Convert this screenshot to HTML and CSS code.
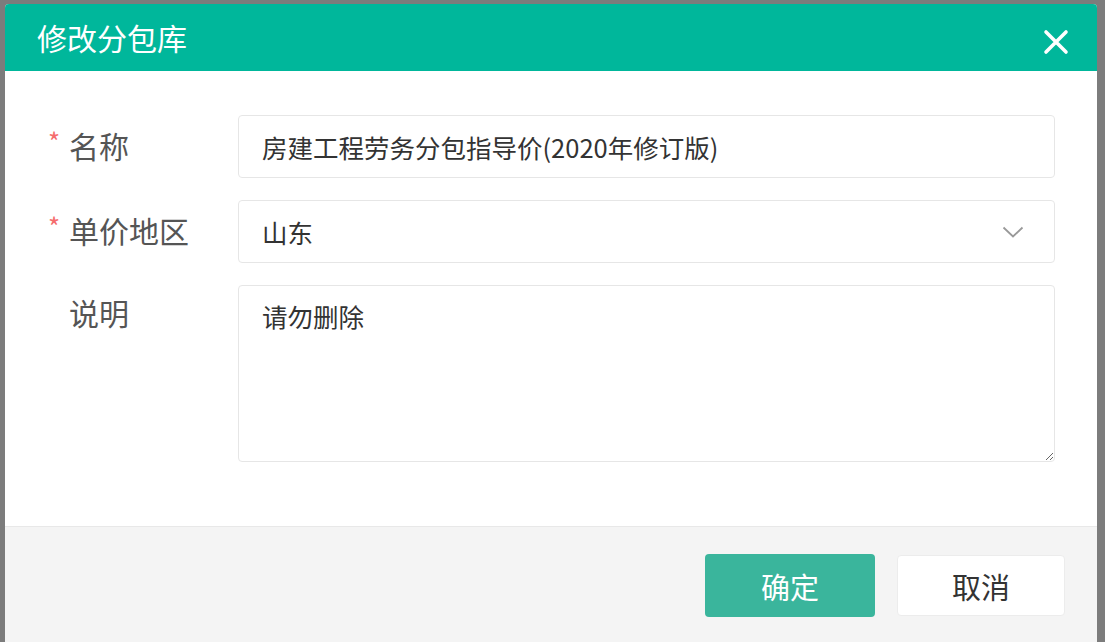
FILE: index.html
```html
<!DOCTYPE html>
<html lang="zh-CN">
<head>
    <meta charset="UTF-8">
    <meta name="viewport" content="width=device-width, initial-scale=1.0">
    <title>修改分包库</title>
    <link rel="stylesheet" href="styles.css">
</head>
<body>
    <div class="dialog">
        <div class="dialog-header">
            <h2>修改分包库</h2>
            <span class="dialog-close">
                <svg width="26" height="26" viewBox="0 0 26 26">
                    <path d="M3 3 L23 23 M23 3 L3 23" stroke="#fff" stroke-width="3.6" stroke-linecap="round" fill="none"/>
                </svg>
            </span>
        </div>

        <div class="dialog-body">
            <div class="form-row">
                <label class="form-label"><span class="req">*</span>名称</label>
                <div class="form-field">
                    <input type="text" class="form-input" value="房建工程劳务分包指导价(2020年修订版)">
                </div>
            </div>

            <div class="form-row">
                <label class="form-label"><span class="req">*</span>单价地区</label>
                <div class="form-field select-box">
                    <span>山东</span>
                    <svg class="select-arrow" width="22" height="13" viewBox="0 0 22 13">
                        <path d="M1.5 1.5 L11 10.5 L20.5 1.5" stroke="#999" stroke-width="1.8" fill="none"/>
                    </svg>
                </div>
            </div>

            <div class="form-row top">
                <label class="form-label"><span class="req"></span>说明</label>
                <div class="form-field">
                    <textarea class="form-textarea">请勿删除</textarea>
                </div>
            </div>
        </div>

        <div class="dialog-footer">
            <button class="btn btn-primary">确定</button>
            <button class="btn btn-default">取消</button>
        </div>
    </div>
</body>
</html>
```

FILE: styles.css
```css
* {
    margin: 0;
    padding: 0;
    box-sizing: border-box;
}

body {
    background-color: #7c7c7c;
    font-family: "Noto Sans CJK SC", "Noto Sans", sans-serif;
    color: #333;
    height: 642px;
    overflow: hidden;
}

.dialog {
    margin: 4px 0 0 5px;
    width: 1092px;
    background-color: #fff;
    border-radius: 4px 4px 0 0;
    overflow: hidden;
}

.dialog-header {
    height: 67px;
    background-color: #00b79b;
    display: flex;
    align-items: center;
    justify-content: space-between;
    padding: 0 28px 0 32px;
}

.dialog-header h2 {
    font-size: 30px;
    font-weight: normal;
    color: #fff;
    line-height: 1;
    margin-top: -2px;
}

.dialog-close {
    display: flex;
    width: 26px;
    height: 26px;
    margin-top: 8px;
}

.dialog-body {
    padding: 44px 42px 64px 43px;
    display: flex;
    flex-direction: column;
    gap: 22px;
}

.form-row {
    display: flex;
    align-items: center;
}

.form-row.top {
    align-items: flex-start;
}

.form-row.top .form-label {
    padding-top: 14px;
}

.form-label {
    width: 190px;
    flex-shrink: 0;
    font-size: 30px;
    color: #555;
    line-height: 34px;
    display: flex;
    margin-top: -4px;
}

.req {
    width: 21px;
    color: #f56c6c;
    font-size: 26px;
    line-height: 26px;
}

.form-field {
    flex: 1;
}

.form-input,
.select-box,
.form-textarea {
    width: 100%;
    height: 63px;
    border: 1px solid #e6e6e6;
    border-radius: 4px;
    padding: 0 23px;
    font-family: "Noto Sans CJK SC", "Noto Sans", sans-serif;
    font-size: 25.5px;
    color: #333;
    background-color: #fff;
    outline: none;
}

.select-box {
    display: flex;
    align-items: center;
    justify-content: space-between;
    padding-right: 30px;
}

.select-arrow {
    margin-top: 2px;
}

.form-textarea {
    height: 177px;
    padding: 13px 23px;
    line-height: 34px;
    resize: vertical;
    display: block;
}

.dialog-footer {
    background-color: #f4f4f4;
    border-top: 1px solid #e8e8e8;
    padding: 27px 32px 30px;
    display: flex;
    justify-content: flex-end;
    gap: 22px;
}

.btn {
    width: 170px;
    height: 63px;
    font-family: "Noto Sans CJK SC", "Noto Sans", sans-serif;
    font-size: 29px;
    border-radius: 4px;
    cursor: pointer;
}

.btn-primary {
    background-color: #3ab59c;
    color: #fff;
    border: none;
}

.btn-default {
    background-color: #fff;
    color: #333;
    border: 1px solid #ececec;
    width: 168px;
    height: 61px;
    margin-top: 1px;
}
```
